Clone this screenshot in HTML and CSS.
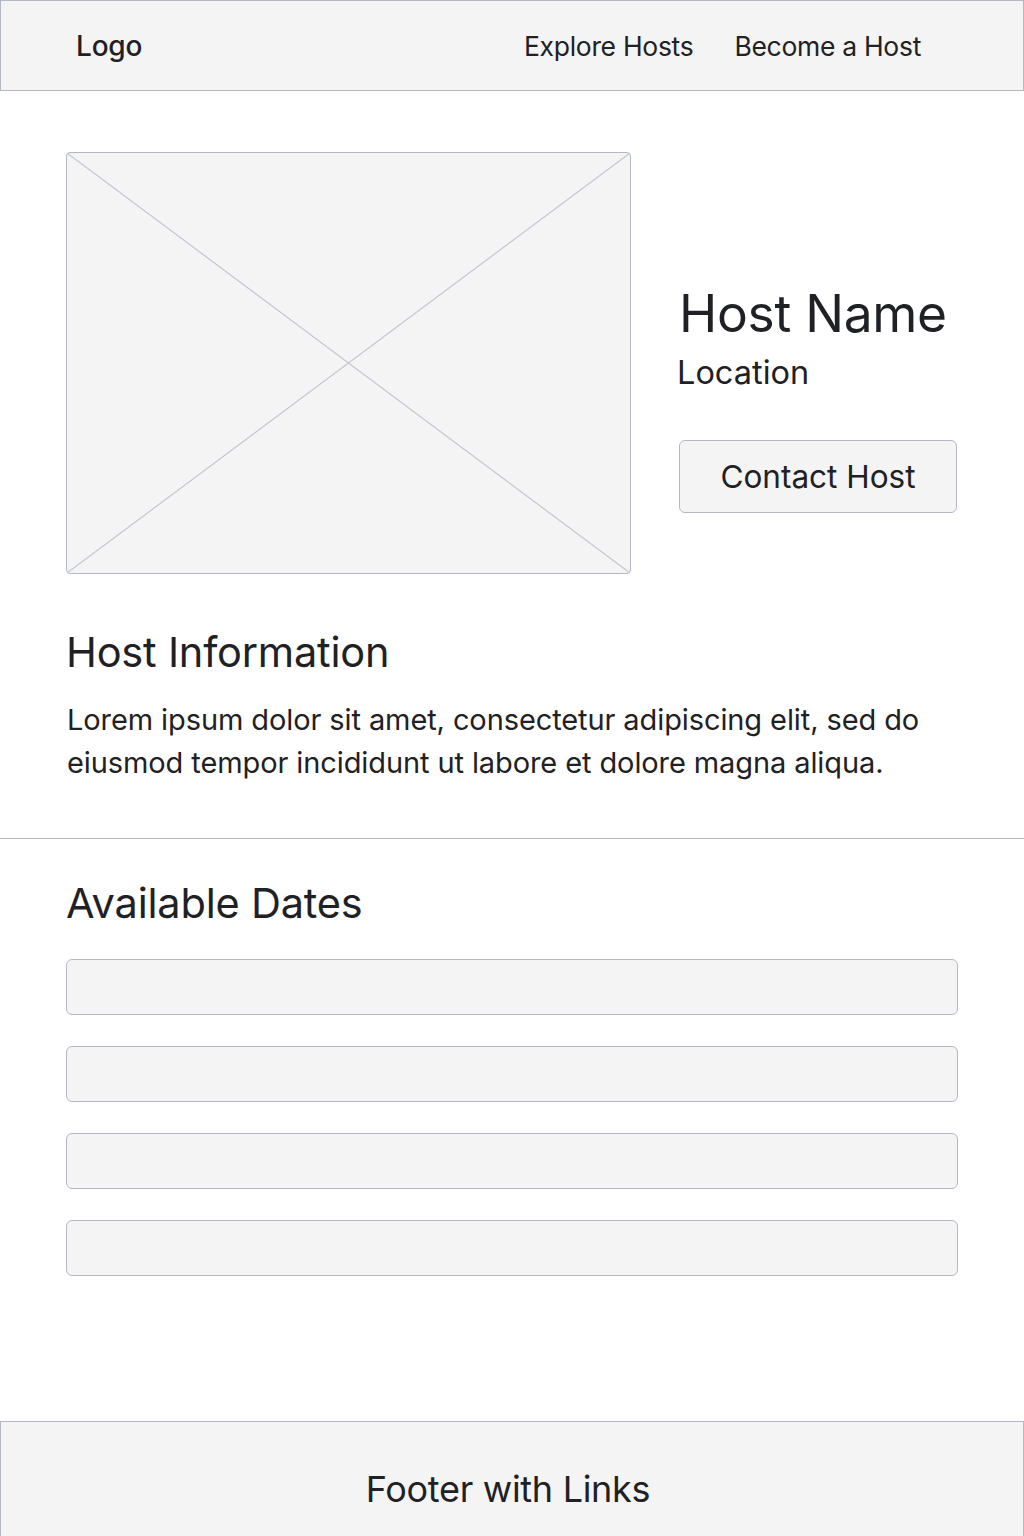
FILE: index.html
```html
<!DOCTYPE html>
<html>
<head>
<meta charset="utf-8">
<link rel="stylesheet" href="styles.css">
</head>
<body>
<header class="topbar">
  <div class="logo">Logo</div>
  <nav class="nav">
    <a class="nav-link">Explore Hosts</a>
    <a class="nav-link">Become a Host</a>
  </nav>
</header>
<main class="main">
  <section class="hero">
    <div class="photo">
      <svg class="photo-x" viewBox="0 0 100 100" preserveAspectRatio="none">
        <line x1="0" y1="0" x2="100" y2="100" vector-effect="non-scaling-stroke"/>
        <line x1="100" y1="0" x2="0" y2="100" vector-effect="non-scaling-stroke"/>
      </svg>
    </div>
    <div class="hero-info">
      <h1 class="host-name">Host Name</h1>
      <div class="location">Location</div>
      <button class="contact-btn">Contact Host</button>
    </div>
  </section>
  <section class="info">
    <h2 class="section-title">Host Information</h2>
    <p class="info-text">Lorem ipsum dolor sit amet, consectetur adipiscing elit, sed do eiusmod tempor incididunt ut labore et dolore magna aliqua.</p>
  </section>
</main>
<hr class="divider">
<section class="dates">
  <h2 class="section-title">Available Dates</h2>
  <div class="date-list">
    <div class="date-row"></div>
    <div class="date-row"></div>
    <div class="date-row"></div>
    <div class="date-row"></div>
  </div>
</section>
<footer class="footer">Footer with Links</footer>
</body>
</html>
```
FILE: styles.css
```css
html, body {
  margin: 0;
  padding: 0;
  background: #ffffff;
}
body {
  font-family: Inter, "Noto Sans", sans-serif;
  color: #1f2124;
  width: 1024px;
  min-height: 1536px;
  display: flex;
  flex-direction: column;
}
.topbar {
  box-sizing: border-box;
  height: 91px;
  background: #f4f4f4;
  border: 1.5px solid #b4b8c6;
  display: flex;
  align-items: center;
  justify-content: space-between;
  padding: 0 102px 0 75px;
}
.logo {
  font-size: 28px;
  font-weight: 500;
  letter-spacing: -0.2px;
}
.nav {
  display: flex;
  gap: 41px;
}
.nav-link {
  font-size: 26.5px;
  color: #1f2124;
  letter-spacing: -0.3px;
}
.main {
  padding: 61px 66px 0 66px;
}
.hero {
  display: flex;
  align-items: flex-start;
  gap: 48px;
}
.photo {
  box-sizing: border-box;
  width: 565px;
  height: 422px;
  border: 1.5px solid #b4b8c6;
  border-radius: 4px;
  background: #f4f4f4;
  flex-shrink: 0;
  overflow: hidden;
}
.photo-x {
  display: block;
  width: 100%;
  height: 100%;
}
.photo-x line {
  stroke: #c4c7d2;
  stroke-width: 1.2;
}
.hero-info {
  display: flex;
  flex-direction: column;
  align-items: flex-start;
  padding-top: 129px;
}
.host-name {
  margin: 0;
  font-size: 51.5px;
  font-weight: 400;
  line-height: 64px;
  letter-spacing: -0.3px;
}
.location {
  font-size: 32.5px;
  line-height: 40px;
  margin-top: 8px;
  margin-left: -2px;
}
.contact-btn {
  margin-top: 47px;
  box-sizing: border-box;
  width: 278px;
  height: 73px;
  background: #f4f4f4;
  border: 1.5px solid #b4b8c6;
  border-radius: 6px;
  font-family: Inter, "Noto Sans", sans-serif;
  font-size: 31.5px;
  color: #1f2124;
  padding: 0;
}
.info {
  padding-top: 50px;
}
.section-title {
  margin: 0;
  font-size: 41.5px;
  font-weight: 400;
  line-height: 56px;
  letter-spacing: -0.2px;
}
.info-text {
  margin: 18px 0 0 1px;
  font-size: 29px;
  line-height: 43px;
  letter-spacing: -0.1px;
}
.divider {
  margin: 54px 0 0 0;
  border: 0;
  border-top: 1.5px solid #b4b8c6;
  height: 0;
}
.dates {
  padding: 36px 66px 0 66px;
}
.date-list {
  margin-top: 28px;
  display: flex;
  flex-direction: column;
  gap: 31px;
}
.date-row {
  box-sizing: border-box;
  width: 892px;
  height: 56px;
  background: #f4f4f4;
  border: 1.5px solid #b4b8c6;
  border-radius: 6px;
}
.footer {
  margin-top: auto;
  box-sizing: border-box;
  height: 115px;
  background: #f4f4f4;
  border: 1.5px solid #b4b8c6;
  border-bottom: 0;
  display: flex;
  align-items: flex-start;
  justify-content: center;
  font-size: 36px;
  line-height: 44px;
  padding-top: 45px;
  padding-right: 8px;
  letter-spacing: -0.3px;
}
```
